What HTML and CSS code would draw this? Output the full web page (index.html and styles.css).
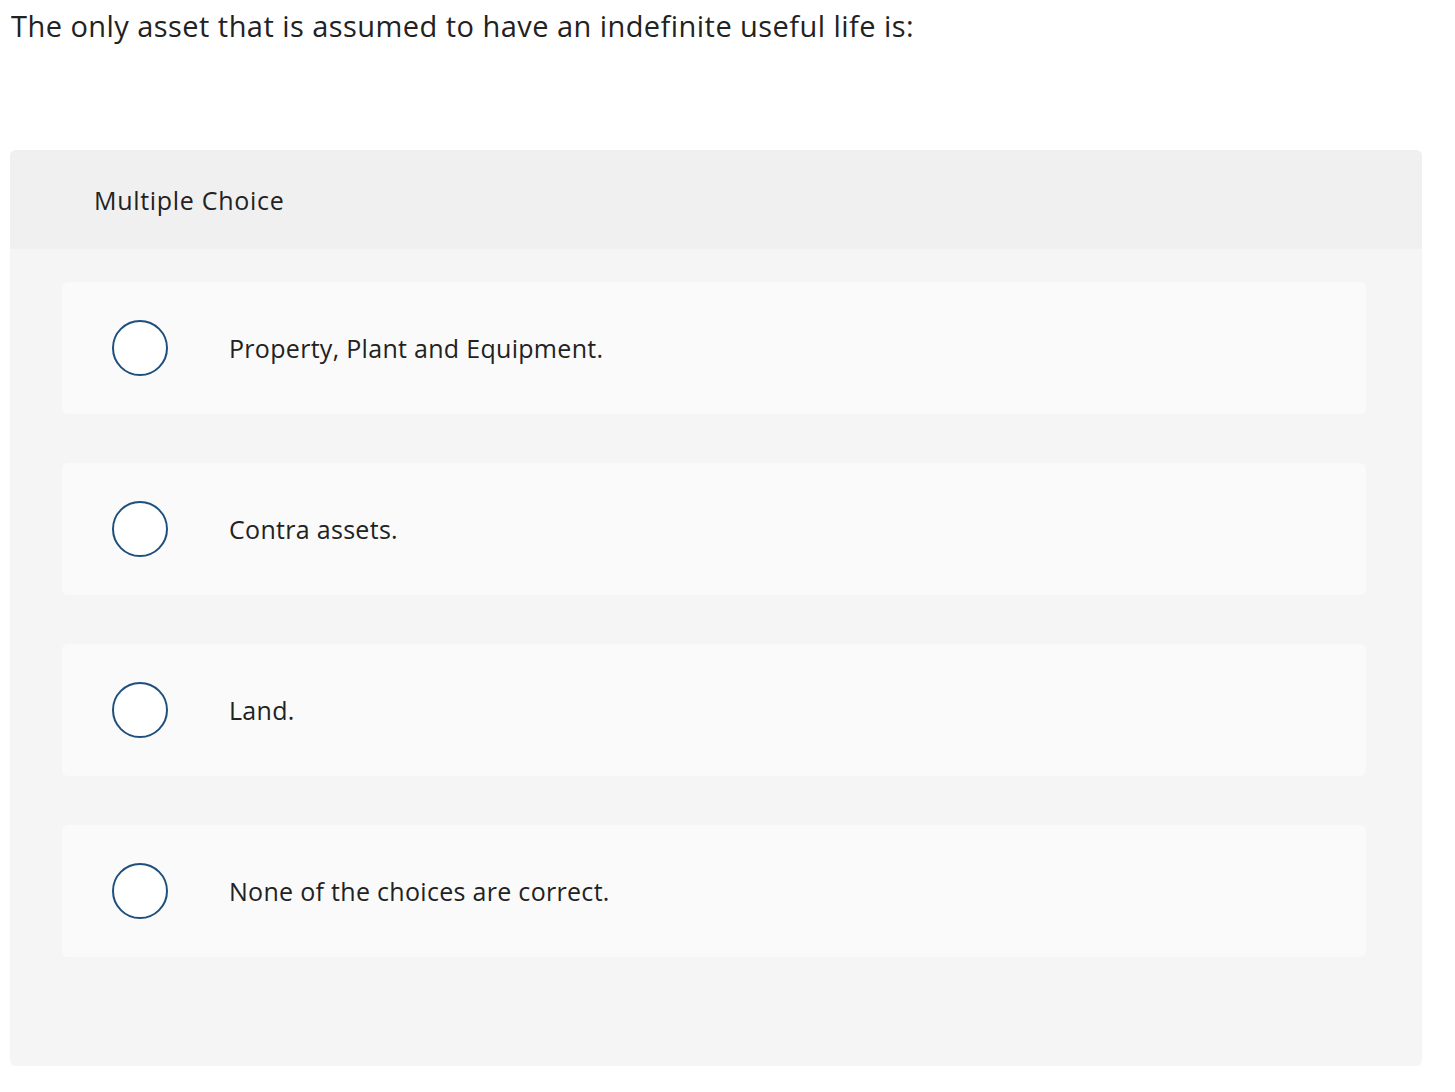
FILE: index.html
```html
<!DOCTYPE html>
<html>
<head>
<meta charset="utf-8">
<link rel="stylesheet" href="styles.css">
</head>
<body>
<p class="question">The only asset that is assumed to have an indefinite useful life is:</p>
<div class="mc">
  <div class="mc-header">Multiple Choice</div>
  <div class="mc-body">
    <div class="option"><span class="radio"></span><span class="label">Property, Plant and Equipment.</span></div>
    <div class="option"><span class="radio"></span><span class="label">Contra assets.</span></div>
    <div class="option"><span class="radio"></span><span class="label">Land.</span></div>
    <div class="option"><span class="radio"></span><span class="label">None of the choices are correct.</span></div>
  </div>
</div>
</body>
</html>
```

FILE: styles.css
```css
html, body {
  margin: 0;
  padding: 0;
  background: #ffffff;
}
body {
  font-family: "Open Sans", "Lato", sans-serif;
  color: #222222;
  padding: 0 33px 0 10px;
}
.question {
  margin: 0;
  padding-top: 8px;
  padding-left: 1px;
  font-size: 29px;
  letter-spacing: 0.45px;
  line-height: 36px;
  height: 150px;
  box-sizing: border-box;
}
.mc {
  border-radius: 6px;
  overflow: hidden;
  background: #f5f5f5;
}
.mc-header {
  background: #f0f0f0;
  height: 99px;
  box-sizing: border-box;
  padding: 34px 0 0 84px;
  font-size: 25px;
  letter-spacing: 0.7px;
  line-height: 32px;
}
.mc-body {
  padding: 33px 56px 109px 52px;
  display: flex;
  flex-direction: column;
  gap: 49px;
}
.option {
  background: #fafafa;
  border-radius: 6px;
  height: 132px;
  display: flex;
  align-items: center;
  padding-left: 50px;
}
.radio {
  width: 56px;
  height: 56px;
  box-sizing: border-box;
  border: 2px solid #1f4f7d;
  border-radius: 50%;
  background: #ffffff;
  flex: none;
}
.label {
  margin-left: 61px;
  font-size: 25px;
  letter-spacing: 0.3px;
  line-height: 32px;
}
```
